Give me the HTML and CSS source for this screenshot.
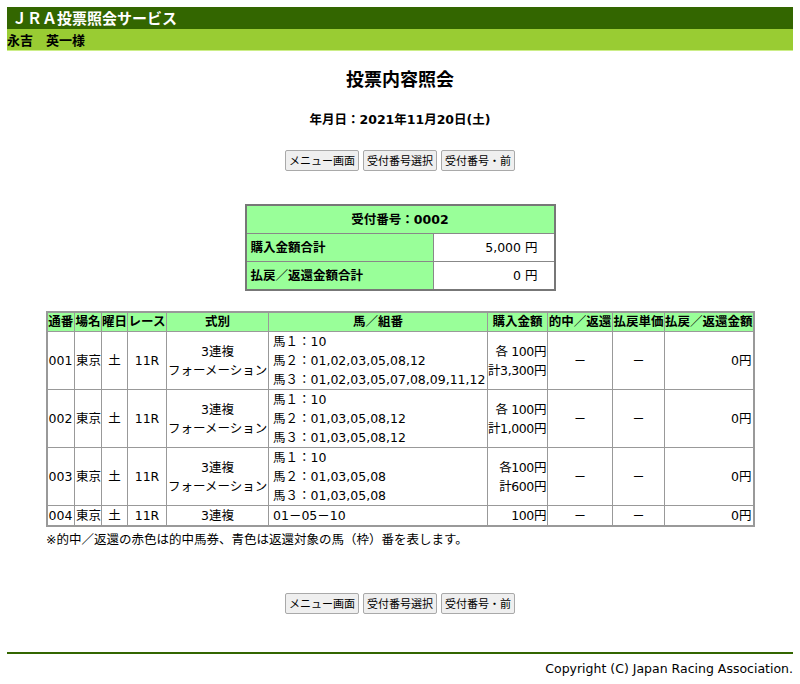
FILE: index.html
```html
<!DOCTYPE html>
<html lang="ja">
<head>
<meta charset="utf-8">
<title>JRA投票照会サービス</title>
<link rel="stylesheet" href="styles.css">
</head>
<body>
<div class="hdr">ＪＲＡ投票照会サービス</div>
<div class="user">永吉　英一様</div>

<h1 class="title">投票内容照会</h1>
<p class="date">年月日：2021年11月20日(土)</p>

<div class="btns">
  <button class="btn">メニュー画面</button>
  <button class="btn">受付番号選択</button>
  <button class="btn">受付番号・前</button>
</div>

<table class="sum">
  <tr><th colspan="2" class="sum-h">受付番号：0002</th></tr>
  <tr><th class="sum-l">購入金額合計</th><td class="sum-v">5,000 円</td></tr>
  <tr><th class="sum-l">払戻／返還金額合計</th><td class="sum-v">0 円</td></tr>
</table>

<table class="main">
  <colgroup>
    <col class="c1"><col class="c2"><col class="c3"><col class="c4"><col class="c5">
    <col class="c6"><col class="c7"><col class="c8"><col class="c9"><col class="c10">
  </colgroup>
  <tr class="head">
    <th>通番</th><th>場名</th><th>曜日</th><th>レース</th><th>式別</th><th>馬／組番</th><th>購入金額</th><th>的中／返還</th><th>払戻単価</th><th>払戻／返還金額</th>
  </tr>
  <tr>
    <td>001</td><td>東京</td><td class="ctr">土</td><td class="ctr">11R</td><td class="ctr">3連複<br>フォーメーション</td>
    <td class="horse">馬１：10<br>馬２：01,02,03,05,08,12<br>馬３：01,02,03,05,07,08,09,11,12</td>
    <td class="rt amt">各 100円<br>計3,300円</td><td class="ctr">－</td><td class="ctr">－</td><td class="rt">0円</td>
  </tr>
  <tr>
    <td>002</td><td>東京</td><td class="ctr">土</td><td class="ctr">11R</td><td class="ctr">3連複<br>フォーメーション</td>
    <td class="horse">馬１：10<br>馬２：01,03,05,08,12<br>馬３：01,03,05,08,12</td>
    <td class="rt amt">各 100円<br>計1,000円</td><td class="ctr">－</td><td class="ctr">－</td><td class="rt">0円</td>
  </tr>
  <tr>
    <td>003</td><td>東京</td><td class="ctr">土</td><td class="ctr">11R</td><td class="ctr">3連複<br>フォーメーション</td>
    <td class="horse">馬１：10<br>馬２：01,03,05,08<br>馬３：01,03,05,08</td>
    <td class="rt amt">各100円<br>計600円</td><td class="ctr">－</td><td class="ctr">－</td><td class="rt">0円</td>
  </tr>
  <tr>
    <td>004</td><td>東京</td><td class="ctr">土</td><td class="ctr">11R</td><td class="ctr">3連複</td>
    <td class="horse">01－05－10</td>
    <td class="rt amt">100円</td><td class="ctr">－</td><td class="ctr">－</td><td class="rt">0円</td>
  </tr>
</table>
<p class="note">※的中／返還の赤色は的中馬券、青色は返還対象の馬（枠）番を表します。</p>

<div class="btns btns2">
  <button class="btn">メニュー画面</button>
  <button class="btn">受付番号選択</button>
  <button class="btn">受付番号・前</button>
</div>

<div class="foot">Copyright (C) Japan Racing Association.</div>
</body>
</html>
```

FILE: styles.css
```css
html, body {
  background: #ffffff;
}
body {
  margin: 7px 7px;
  font-family: "DejaVu Sans", "Noto Sans CJK JP", sans-serif;
  font-size: 12.5px;
  line-height: 19px;
  color: #000;
}
.hdr {
  background: #336600;
  color: #ffffff;
  font-weight: bold;
  font-size: 15px;
  height: 22px;
  line-height: 22px;
  padding-left: 5px;
  font-family: "Noto Sans CJK JP", sans-serif;
}
.user {
  background: #99cc33;
  font-weight: bold;
  font-size: 13px;
  height: 21px;
  line-height: 21px;
  border-bottom: 1px solid #ccee88;
  font-family: "Noto Sans CJK JP", sans-serif;
}
.title {
  margin: 17px 0 0;
  text-align: center;
  font-size: 18px;
  line-height: 24px;
  font-weight: bold;
}
.date {
  margin: 18px 0 0;
  text-align: center;
  font-weight: bold;
}
.btns {
  margin-top: 21px;
  display: flex;
  justify-content: center;
  gap: 4px;
}
.btn {
  font-family: "Noto Sans CJK JP", sans-serif;
  font-size: 11px;
  height: 21px;
  line-height: 17px;
  padding: 1px 3px;
  background: #efefef;
  border: 1px solid #a9a9a9;
  border-radius: 2px;
  color: #000;
}
.sum {
  margin: 33px auto 0;
  border-collapse: collapse;
  width: 311px;
  border: 2px solid #777;
}
.sum th, .sum td {
  border: 1px solid #888;
  height: 27px;
  padding: 0 4px;
}
.sum-h {
  background: #99ff99;
  text-align: center;
  font-weight: bold;
}
.sum-l {
  background: #99ff99;
  text-align: left;
  font-weight: bold;
  width: 178px;
}
.sum-v {
  text-align: right;
  padding-right: 16px !important;
  background: #fff;
}
.main {
  margin: 20px auto 0;
  border-collapse: collapse;
  width: 707px;
  table-layout: fixed;
  border: 2px solid #999;
}
.c1 { width: 28px; }
.c2 { width: 27px; }
.c3 { width: 26px; }
.c4 { width: 39px; }
.c5 { width: 102px; }
.c6 { width: 219px; }
.c7 { width: 60px; }
.c8 { width: 65px; }
.c9 { width: 52px; }
.c10 { width: 89px; }
.main th, .main td {
  border: 1px solid #999;
  padding: 0 1px;
  vertical-align: middle;
  white-space: nowrap;
}
.main th {
  background: #99ff99;
  font-weight: bold;
  text-align: center;
  height: 18px;
  line-height: 18px;
  padding: 0;
}
.main td {
  text-align: left;
}
.main .ctr { text-align: center; }
.main .rt { text-align: right; }
.main .amt {
  padding: 0 1px 0 0;
  letter-spacing: -0.4px;
}
.main .horse { padding-left: 4px; }
.note {
  margin: 3px 0 0 39px;
}
.btns2 {
  margin-top: 44px;
}
.foot {
  margin-top: 38px;
  border-top: 2px solid #336600;
  padding-top: 5px;
  text-align: right;
}
```
